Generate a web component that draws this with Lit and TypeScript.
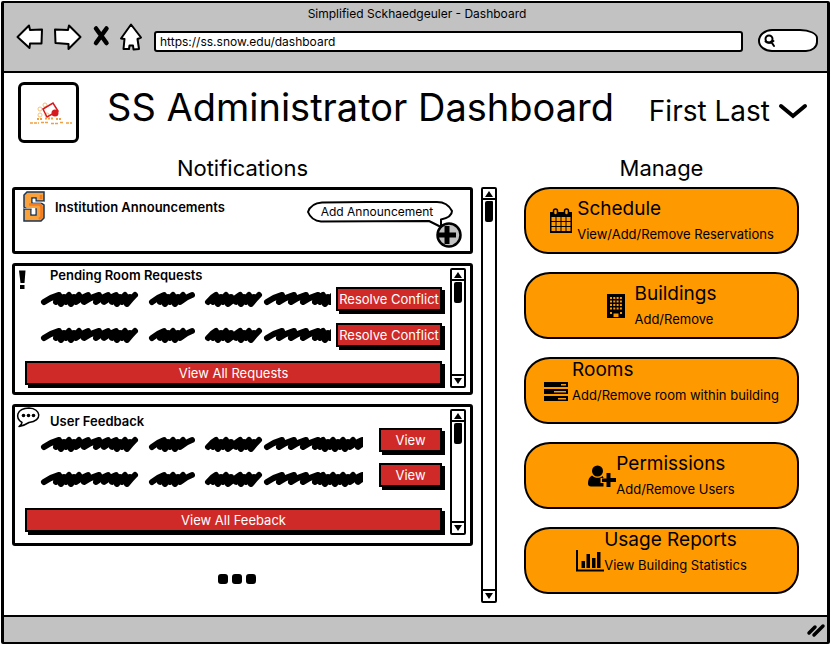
import { LitElement, html, css, svg } from "lit";
import { customElement, property } from "lit/decorators.js";

const reset = css`
  * { box-sizing: border-box; }
  button, input {
    font: inherit;
    color: inherit;
    margin: 0;
    padding: 0;
    border: 0;
    background: none;
    outline: 0;
  }
  button { cursor: pointer; }
  svg { display: block; flex: none; overflow: visible; }
`;

@customElement("sketch-scrollbar")
class SketchScrollbar extends LitElement {
  static styles = [reset, css`
    :host {
      display: flex;
      flex-direction: column;
      width: 16px;
      flex: none;
      border: 2px solid #000;
      border-radius: 2px;
      background: #fff;
    }
    .cap { height: 10px; display: grid; place-items: center; flex: none; }
    .up { border-bottom: 2px solid #000; height: 11px; }
    .down { border-top: 2px solid #000; height: 12px; }
    .track { flex: 1; display: flex; justify-content: center; padding-top: 1px; }
    .thumb { width: 8px; height: 21px; background: #000; border-radius: 2px 1px 3px 2px; }
  `];
  render() {
    return html`
      <button class="cap up" aria-label="Scroll up">
        <svg width="8" height="6" viewBox="0 0 8 6"><path d="M4 0 8 6H0Z" /></svg>
      </button>
      <div class="track"><div class="thumb"></div></div>
      <button class="cap down" aria-label="Scroll down">
        <svg width="8" height="6" viewBox="0 0 8 6"><path d="M4 6 0 0H8Z" /></svg>
      </button>`;
  }
}

/* Each word is a start x and a list of strokes: l = loose loop, m = medium, d = dense. */
const words: [number, string][] = [
  [5, "lddddmlmmdddd"],
  [113, "mddddm"],
  [169, "ddddmdddd"],
  [228, "lllldddddddmm"],
];
const reach: Record<string, [number, number]> = { l: [15, -3], m: [12, -4], d: [8, -3] };

function scribble([start, strokes]: [number, string]) {
  let x = start;
  let y = 12;
  let d = `M${x} ${y}`;
  [...strokes].forEach((s, i) => {
    const [up, back] = reach[s];
    const top = s === "d" && i % 2 ? 7 : 5;
    d += `Q${x + up / 2} ${y - 5} ${x + up} ${top}`;
    x += up + back;
    if (i < strokes.length - 1) {
      y = s === "d" && i % 2 ? 14 : 12;
      d += `L${x} ${y}`;
    }
  });
  return d;
}

@customElement("notice-panel")
class NoticePanel extends LitElement {
  @property() heading = "";
  @property() action = "";
  @property() all = "";
  @property({ type: Boolean, reflect: true }) roomy = false;

  static styles = [reset, css`
    :host {
      display: flex;
      gap: 5px;
      border: 3px solid #000;
      border-radius: 3px;
      padding: 0 4px 4px 10px;
    }
    .body { flex: 1; min-width: 0; display: flex; flex-direction: column; }
    .head { display: flex; height: 21px; margin-left: -9px; }
    .icon { width: 34px; }
    h3 { margin: 0; font-size: 13px; line-height: 19px; font-weight: 600; }
    .row { display: flex; align-items: flex-start; gap: 5px; padding: 0 3px 3px 14px; }
    .row + .row { margin-top: 9px; }
    .text { flex: 1; min-width: 0; height: 18px; overflow: hidden; margin-top: 3px; }
    .text path { fill: none; stroke: #000; stroke-width: 6; stroke-linecap: round; stroke-linejoin: round; }
    .red {
      height: 24px;
      border: 2px solid #000;
      box-shadow: 3px 3px 0 #000;
      background: #cf2a27;
      color: #fff;
      font-size: 13px;
      line-height: 16px;
      white-space: nowrap;
    }
    .small { width: 106px; flex: none; }
    .wide { margin: 11px 3px 3px 0; }
    sketch-scrollbar { margin-top: 2px; }
    :host([roomy]) { padding-bottom: 8px; }
    :host([roomy]) h3 { line-height: 28px; }
    :host([roomy]) .row { gap: 16px; }
    :host([roomy]) .row + .row { margin-top: 7px; }
    :host([roomy]) .text { margin-top: 7px; }
    :host([roomy]) .small { width: 63px; }
    :host([roomy]) .wide { margin-top: 17px; }
  `];

  render() {
    const row = html`
      <div class="row">
        <div class="text">
          <svg width="326" height="18" viewBox="0 0 326 18" aria-hidden="true">
            ${words.map((w) => svg`<path d=${scribble(w)} />`)}
          </svg>
        </div>
        <button class="red small">${this.action}</button>
      </div>`;
    return html`
      <div class="body">
        <div class="head"><span class="icon"><slot></slot></span><h3>${this.heading}</h3></div>
        ${row}${row}
        <button class="red wide">${this.all}</button>
      </div>
      <sketch-scrollbar></sketch-scrollbar>`;
  }
}

const calendar = html`<svg width="24" height="26" viewBox="0 0 24 26">
  <path d="M1 4h22v21H1Z" />
  <g fill="#ff9900"><path d="M2.500 9h4v4h-4zM7.500 9h4v4h-4zM12.500 9h4v4h-4zM17.500 9h4v4h-4zM2.500 14h4v4h-4zM7.500 14h4v4h-4zM12.500 14h4v4h-4zM17.500 14h4v4h-4zM2.500 19h4v4h-4zM7.500 19h4v4h-4zM12.500 19h4v4h-4zM17.500 19h4v4h-4z" /></g>
  <rect x="4.500" y="1" width="4" height="6" rx="2" fill="#ff9900" stroke="#000" stroke-width="1.500" />
  <rect x="15.500" y="1" width="4" height="6" rx="2" fill="#ff9900" stroke="#000" stroke-width="1.500" />
</svg>`;
const building = html`<svg width="20" height="26" viewBox="0 0 20 26">
  <path d="M1 1h18v24H1Z" />
  <g stroke="#ff9900" stroke-width="2" stroke-dasharray="2 1.300"><path d="M4 5h12M4 8.500h12M4 12h12M4 15.500h12" /></g>
  <path d="M7.500 20.500h5V24h-5zM4 19h2v2H4zM14 19h2v2h-2z" fill="#ff9900" />
</svg>`;
const bars = html`<svg width="24" height="20" viewBox="0 0 24 20">
  <path d="M0 1h24v5H0zM0 8h24v5H0zM0 15h24v5H0z" />
  <path d="M17 3h5v1.500h-5zM10 10h12v1.500H10zM14 17h8v1.500h-8z" fill="#ff9900" />
</svg>`;
const person = html`<svg width="28" height="22" viewBox="0 0 28 22">
  <circle cx="9.500" cy="6" r="5.500" />
  <path d="M4 10.500C1 12 0 15 0 18.500 0 20.500 1 21.500 3 21.500h12.500V18h-3v-5h3l-.7-2C12 13.500 7 13.500 4 10.500Z" />
  <path d="M18.500 8h4v5H28v4h-5.500v5h-4v-5H14v-3.500h4.500z" />
</svg>`;
const chart = html`<svg width="28" height="22" viewBox="0 0 28 22">
  <path d="M1 0v20.500H28" fill="none" stroke="#000" stroke-width="2" />
  <path d="M5.500 11h3.500v7H5.500zM10.500 4H14v14h-3.500zM16 8h3.500v10H16zM21 2h3.500v16H21z" />
</svg>`;

const cards = [
  { title: "Schedule", note: "View/Add/Remove Reservations", icon: calendar, kind: "near" },
  { title: "Buildings", note: "Add/Remove", icon: building, kind: "far" },
  { title: "Rooms", note: "Add/Remove room within building", icon: bars, kind: "near high" },
  { title: "Permissions", note: "Add/Remove Users", icon: person, kind: "" },
  { title: "Usage Reports", note: "View Building Statistics", icon: chart, kind: "high" },
];

@customElement("app-root")
class AppRoot extends LitElement {
  static styles = [reset, css`
    :host {
      display: flex;
      flex-direction: column;
      box-sizing: border-box;
      min-height: 100vh;
      padding: 1px;
      background: #fff;
      color: #000;
      font-family: Inter, "Liberation Sans", sans-serif;
      font-size: 14px;
    }
    .window {
      flex: 1;
      display: flex;
      flex-direction: column;
      border: 2px solid #000;
      border-width: 2px 3px;
      border-radius: 2px;
    }
    .bar {
      height: 70px;
      background: #c2c2c2;
      border-bottom: 2px solid #000;
      padding: 3px 9px 0 12px;
    }
    .caption { text-align: center; font-size: 12px; line-height: 16px; }
    .nav { display: flex; align-items: center; height: 30px; }
    .nav button { margin-right: 10px; }
    .nav .home { margin-right: 12px; }
    .url {
      flex: 1;
      min-width: 0;
      align-self: flex-end;
      height: 21px;
      border: 2px solid #000;
      border-radius: 3px;
      background: #fff;
      padding-left: 4px;
      font-size: 12px;
    }
    .search {
      align-self: flex-end;
      display: flex;
      align-items: center;
      width: 60px;
      height: 23px;
      margin-left: 15px;
      padding-left: 4px;
      border: 2px solid #000;
      border-radius: 14px 18px 12px 14px / 12px 9px 10px 11px;
      background: #fff;
    }
    .search input { width: 30px; font-size: 12px; }
    main { flex: 1; display: flex; flex-direction: column; padding: 9px 28px 12px 8px; }
    header { display: flex; align-items: flex-start; padding-left: 6px; height: 61px; }
    .logo {
      width: 61px;
      height: 61px;
      border: 3px solid #000;
      border-radius: 6px;
      display: grid;
      place-items: center;
      flex: none;
    }
    .title { display: flex; flex: 1; align-items: baseline; justify-content: space-between; padding-left: 28px; }
    h1 { margin: 0; font-size: 38px; line-height: 50px; font-weight: 400; white-space: nowrap; }
    .user { display: flex; align-items: center; gap: 9px; font-size: 28px; line-height: 32px; margin-right: -8px; white-space: nowrap; }
    .columns {
      flex: 1;
      display: grid;
      grid-template-columns: minmax(0, 461fr) 16px minmax(0, 294fr);
      grid-template-rows: auto 1fr;
      column-gap: 8px;
    }
    h2 { margin: 0; font-size: 22px; line-height: 30px; font-weight: 400; text-align: center; padding-top: 10px; height: 44px; }
    .side { grid-column: 3; margin-left: 19px; }
    .notices { display: flex; flex-direction: column; gap: 9px; }
    .news {
      display: flex;
      justify-content: space-between;
      border: 3px solid #000;
      border-radius: 3px;
      height: 67px;
      padding: 0 8px;
    }
    .label { display: flex; gap: 10px; }
    .label svg { margin-top: 1px; }
    h3 { margin: 0; font-size: 13px; line-height: 34px; font-weight: 600; }
    .announce { display: flex; flex-direction: column; align-items: flex-end; padding-top: 11px; }
    .bubble {
      position: relative;
      width: 146px;
      height: 21px;
      margin-right: 9px;
      z-index: 1;
      text-align: center;
      font-size: 12px;
      line-height: 22px;
      padding-right: 6px;
      white-space: nowrap;
    }
    .bubble svg { position: absolute; inset: 0; }
    .bubble span { position: relative; }
    .more { display: flex; justify-content: center; gap: 4px; padding-top: 19px; margin-right: 12px; }
    .dot { width: 10px; height: 10px; border-radius: 3px; background: #000; }
    .cards { display: flex; flex-direction: column; gap: 18px; }
    .card {
      display: flex;
      align-items: center;
      justify-content: center;
      height: 67px;
      border: 2px solid #000;
      border-radius: 26px 24px 22px 24px / 24px 20px 24px 26px;
      background: #ff9900;
      text-align: left;
      white-space: nowrap;
    }
    .near { gap: 4px; }
    .far { gap: 8px; }
    .name { display: block; font-size: 19px; line-height: 26px; }
    .note { display: block; font-size: 13px; line-height: 24px; }
    .high .words { padding-bottom: 18px; }
    footer {
      height: 27px;
      border-top: 2px solid #000;
      background: #c2c2c2;
      display: flex;
      align-items: center;
      justify-content: flex-end;
      padding-right: 2px;
    }
  `];

  render() {
    return html`
      <div class="window">
        <div class="bar">
          <div class="caption">Simplified Sckhaedgeuler - Dashboard</div>
          <div class="nav">
            <button aria-label="Back">
              <svg width="27" height="26" viewBox="0 0 27 26"><path d="M1.500 13 13 1.500 14 6 26 5.500 25.500 19.500 14 19.500 13.500 24Z" fill="#fff" stroke="#000" stroke-width="2" stroke-linejoin="round" /></svg>
            </button>
            <button aria-label="Forward">
              <svg width="29" height="26" viewBox="0 0 29 26"><path d="M27.500 13 16 1.500 15 6 2 5.500 2.500 19 15.500 20 15.500 25Z" fill="#fff" stroke="#000" stroke-width="2" stroke-linejoin="round" /></svg>
            </button>
            <button aria-label="Stop">
              <svg width="18" height="20" viewBox="0 0 18 20"><path d="M4 1.500 14.500 16M14.500 1.500 4 16" fill="none" stroke="#000" stroke-width="4.500" stroke-linecap="round" /></svg>
            </button>
            <button class="home" aria-label="Home">
              <svg width="22" height="28" viewBox="0 0 22 28"><path d="M11 1.500 21 14.500 17.500 16 19 26 13.500 26.500 13 22.500H9.500L9 26H3.500L4.500 16 1 15.500Z" fill="#fff" stroke="#000" stroke-width="2" stroke-linejoin="round" /></svg>
            </button>
            <input class="url" aria-label="Address" value="https://ss.snow.edu/dashboard" />
            <label class="search">
              <svg width="12" height="13" viewBox="0 0 12 13"><g fill="none" stroke="#000" stroke-width="2"><circle cx="5" cy="5" r="3.500" /><path d="M1.500 7.500C3 9.500 8 9 9.500 7M7 7.500 10 12" stroke-linecap="round" /></g></svg>
              <input aria-label="Search" />
            </label>
          </div>
        </div>

        <main>
          <header>
            <div class="logo">
              <svg width="46" height="26" viewBox="0 0 46 26">
                <g fill="none" stroke="#f5c27a" stroke-width="1"><circle cx="14" cy="9" r="2" /><circle cx="19" cy="5" r="2" /><circle cx="14" cy="15" r="2" /><circle cx="21" cy="15" r="2" /></g>
                <path d="M17 9 27 3 32 11 21 17Z" fill="none" stroke="#d6181f" stroke-width="1.500" />
                <circle cx="29" cy="13" r="3.500" fill="#d6181f" />
                <path d="M11 19h5M19 18.500h8M30 19h6" fill="none" stroke="#f0a040" stroke-width="2" stroke-dasharray="2 1" />
                <path d="M4 23h9M15 22.500h8M25 23.500h7M34 22.500h4M40 23h6" fill="none" stroke="#f0a040" stroke-width="1.500" stroke-dasharray="3 1" />
              </svg>
            </div>
            <div class="title">
              <h1>SS Administrator Dashboard</h1>
              <button class="user">First Last
                <svg width="28" height="16" viewBox="0 0 28 16"><path d="M2 3 14 13 26 3" fill="none" stroke="#000" stroke-width="4" stroke-linecap="round" /></svg>
              </button>
            </div>
          </header>

          <div class="columns">
            <h2>Notifications</h2>
            <h2 class="side">Manage</h2>

            <section class="notices">
              <div class="news">
                <div class="label">
                  <svg width="22" height="31" viewBox="0 0 22 31">
                    <path d="M4 1H21V10H13V7H9V12H18L21 14V27L18 30H1V18H8V24H13V18H4L1 16V4Z" fill="#f9a13a" stroke="#17365c" stroke-width="1.500" />
                    <path d="M9.700 7.700H12.300V10.700H21V11.500H9.700ZM1 17H12.300V23.300H8.700V17.500H1Z" fill="#fff" />
                    <path d="M6 13.500H17L18.500 16V26L16 28M18 8V4" fill="none" stroke="#f37b21" stroke-width="2.500" />
                  </svg>
                  <h3>Institution Announcements</h3>
                </div>
                <div class="announce">
                  <div class="bubble" id="add-label">
                    <svg width="146" height="28" viewBox="0 0 146 28"><path d="M15 1.500 60 1 130 1C139 1 143 6 145 10 145 15 141 17 134 18.500L134 26 122 20 14 20.500C7 20 3 16 1 11 3 5 8 2 15 1.500Z" fill="#fff" stroke="#000" stroke-width="2" stroke-linejoin="round" /></svg>
                    <span>Add Announcement</span>
                  </div>
                  <button aria-labelledby="add-label">
                    <svg width="26" height="26" viewBox="0 0 26 26"><circle cx="13" cy="13" r="11.500" fill="#c2c2c2" stroke="#000" stroke-width="2.500" /><path d="M11 4v18M2 13H20" stroke="#000" stroke-width="5" /></svg>
                  </button>
                </div>
              </div>

              <notice-panel heading="Pending Room Requests" action="Resolve Conflict" all="View All Requests">
                <svg width="12" height="24" viewBox="0 0 12 24"><path d="M3 4.500H9.500L8.500 17H4.500ZM4 19H8.500V23H4Z" /></svg>
              </notice-panel>

              <notice-panel roomy heading="User Feedback" action="View" all="View All Feeback">
                <svg width="25" height="21" viewBox="0 0 25 21"><path d="M6 15.500C-1 11 0 1.500 13 1 25 1.500 27 14 13 15.500 9 18 7 19 3 19.500 5 18 6 17 6 15.500Z" fill="#fff" stroke="#000" stroke-width="1.500" stroke-linejoin="round" /><circle cx="7.500" cy="8.500" r="1.800" /><circle cx="12.500" cy="8.500" r="1.800" /><circle cx="17.500" cy="8.500" r="1.800" /></svg>
              </notice-panel>

              <div class="more"><i class="dot"></i><i class="dot"></i><i class="dot"></i></div>
            </section>

            <sketch-scrollbar></sketch-scrollbar>

            <section class="cards side">
              ${cards.map((c) => html`
                <button class="card ${c.kind}">
                  ${c.icon}
                  <span class="words"><span class="name">${c.title}</span><span class="note">${c.note}</span></span>
                </button>`)}
            </section>
          </div>
        </main>

        <footer>
          <svg width="18" height="14" viewBox="0 0 18 14"><path d="M2 10 8 4M7 12 16 3" stroke="#000" stroke-width="3.500" stroke-linecap="round" /></svg>
        </footer>
      </div>`;
  }
}
